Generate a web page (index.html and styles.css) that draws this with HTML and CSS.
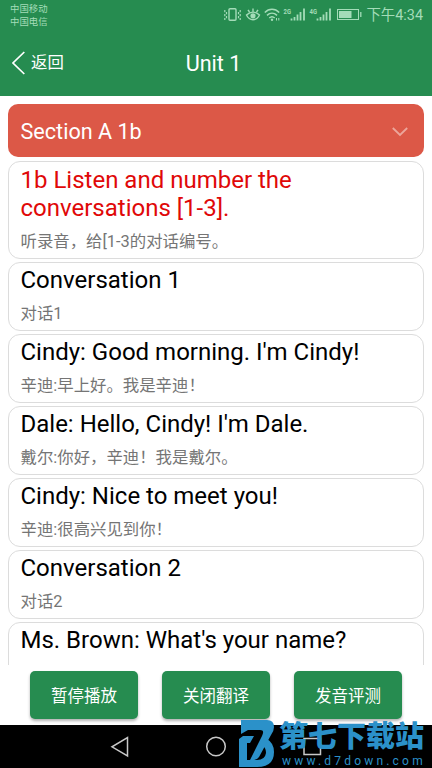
FILE: index.html
```html
<!DOCTYPE html>
<html lang="zh-CN">
<head>
  <meta charset="UTF-8" />
  <meta name="viewport" content="width=device-width,initial-scale=1.0"/>
  <title>Unit 1</title>
  <link rel="stylesheet" href="styles.css">
</head>
<body>
  <div class="screen">
    <header class="header">
      <div class="status-bar">
        <div class="carriers">
          <div>中国移动</div>
          <div>中国电信</div>
        </div>
        <div class="status-right">
          <svg class="status-icons" width="138" height="16" viewBox="0 0 138 16" fill="none" stroke="currentColor">
            <!-- vibrate -->
            <rect x="5" y="1.7" width="7" height="11.6" rx="1" stroke-width="1.4"/>
            <path d="M.8 3v2.200M2.500 5v2.200M.8 7v2.200M2.500 9v2.200M.8 11v2M16.200 3v2.200M14.500 5v2.200M16.200 7v2.200M14.500 9v2.200M16.200 11v2" stroke-width="1.200"/>
            <!-- eye comfort -->
            <path d="M22.500 8c4-3.800 9-3.800 13 0-3 6.300-10 6.300-13 0zM29 1.500v3M24 2.800l1.500 2.200M34 2.800l-1.500 2.200" stroke-width="1.400"/>
            <circle cx="29" cy="8.800" r="2.600" fill="currentColor" stroke="none"/>
            <!-- wifi -->
            <path d="M40.800 5.500c4.200-4.200 10.200-4.200 14.400 0M43 8.400c3-2.800 7-2.800 10 0M45.300 11c1.600-1.500 3.800-1.500 5.400 0" stroke-width="1.500"/>
            <circle cx="48" cy="12.800" r="1.200" fill="currentColor" stroke="none"/>
            <path d="M52.500 11v2.500M54.800 11v2.500" stroke-width="1"/>
            <!-- signal bars -->
            <path d="M67.500 11.500v2M70.500 10v3.500M73.500 7.500v6M76.500 5v8.500M80 1.500v12M93.500 11.500v2M96.500 10v3.500M99.500 7.500v6M102.500 5v8.500M106 1.500v12" stroke-width="1.800"/>
            <!-- battery -->
            <rect x="113.500" y="2.500" width="21" height="10" stroke-width="1"/>
            <path d="M115 4h12.500v7H115z" fill="currentColor" stroke="none"/>
            <path d="M136.800 5v5" stroke-width="1.300"/>
            <g class="net" fill="currentColor" stroke="none">
              <text x="59.500" y="7" textLength="7.500" lengthAdjust="spacingAndGlyphs">2G</text>
              <text x="85.500" y="7" textLength="7.500" lengthAdjust="spacingAndGlyphs">4G</text>
            </g>
          </svg>
          <span class="time">下午4:34</span>
        </div>
      </div>
      <div class="title-bar">
        <a class="back">
          <svg width="13" height="24" viewBox="0 0 13 24" fill="none" stroke="#fff" stroke-width="1.7"><path d="M12.300 1L1 12l11.300 11"/></svg>
          <span>返回</span>
        </a>
        <h1 class="title">Unit 1</h1>
      </div>
    </header>

    <main class="list">
      <div class="section-head">
        <span>Section A 1b</span>
        <svg width="16" height="10" viewBox="0 0 16 10" fill="none" stroke="#eca69b" stroke-width="1.800"><path d="M.8 1L8 8l7.200-7"/></svg>
      </div>
      <div class="card active">
        <p class="en">1b Listen and number the conversations [1-3].</p>
        <p class="zh">听录音，给[1-3的对话编号。</p>
      </div>
      <div class="card">
        <p class="en">Conversation 1</p>
        <p class="zh">对话1</p>
      </div>
      <div class="card">
        <p class="en">Cindy: Good morning. I'm Cindy!</p>
        <p class="zh">辛迪:早上好。我是辛迪！</p>
      </div>
      <div class="card">
        <p class="en">Dale: Hello, Cindy! I'm Dale.</p>
        <p class="zh">戴尔:你好，辛迪！我是戴尔。</p>
      </div>
      <div class="card">
        <p class="en">Cindy: Nice to meet you!</p>
        <p class="zh">辛迪:很高兴见到你！</p>
      </div>
      <div class="card">
        <p class="en">Conversation 2</p>
        <p class="zh">对话2</p>
      </div>
      <div class="card">
        <p class="en">Ms. Brown: What's your name?</p>
      </div>
    </main>

    <div class="actions">
      <button class="btn">暂停播放</button>
      <button class="btn">关闭翻译</button>
      <button class="btn">发音评测</button>
    </div>

    <nav class="nav-bar">
      <svg width="432" height="43" viewBox="0 0 432 43" fill="none" stroke="#c8c8c8" stroke-width="1.500">
        <path d="M127.500 12.500v18.500l-15.500-9.200z"/>
        <circle cx="216" cy="21.500" r="9.300"/>
        <path d="M304 13.500h16.500v16H304z"/>
      </svg>
    </nav>

    <div class="watermark">
      <svg width="36" height="48" viewBox="0 0 36 48" fill="#2b91c9">
        <path d="M0 19l4-3h11l-4 7H8v17h10q8 0 9-7 0-5-3-7l4-7q7 4 7 13 0 15-17 15H0z"/>
        <path d="M2 0h26q7 0 7 7 0 4-3 8L20 37q-2 3-5 3h-4l12-24q3-6-2-6H9l-7 4z"/>
      </svg>
      <div class="watermark-text">
        <div class="watermark-name">第七下载站</div>
        <div class="watermark-url">www.d7down.com</div>
      </div>
    </div>
  </div>
</body>
</html>
```
FILE: styles.css
```css
* {
  box-sizing: border-box;
}
html, body {
  margin: 0;
  height: 100%;
}
body {
  font-family: Roboto, 'Noto Sans CJK SC', sans-serif;
  background: #fff;
}
h1, p {
  margin: 0;
  font-weight: 400;
}
svg {
  display: block;
}
.screen {
  position: relative;
  width: 432px;
  height: 768px;
  display: flex;
  flex-direction: column;
  overflow: hidden;
}
.header {
  flex: none;
  height: 96px;
  background: #268c50;
  color: #fff;
}
.status-bar {
  height: 30px;
  padding: 0 9px 0 10px;
  display: flex;
  justify-content: space-between;
  color: #a4dcb8;
}
.carriers {
  padding-top: 2px;
  font-size: 9.4px;
  line-height: 13px;
}
.status-right {
  display: flex;
  align-items: center;
  gap: 4px;
}
.net {
  font-size: 8px;
  font-weight: 700;
}
.time {
  padding-top: 2px;
  font-size: 14.4px;
  line-height: 28px;
}
.title-bar {
  height: 66px;
  display: grid;
  grid-template-columns: 1fr auto 1fr;
  align-items: center;
  padding: 0 17px 0 12px;
}
.back {
  display: flex;
  align-items: center;
  gap: 6px;
  font-size: 16.4px;
  line-height: 22px;
}
.title {
  font-size: 21.6px;
}
.list {
  flex: none;
  height: 569px;
  padding: 8px 8px 0;
  overflow: hidden;
}
.section-head {
  height: 53px;
  margin-bottom: 4px;
  padding: 2px 16px 0 12.5px;
  border-radius: 10px;
  background: #dc5847;
  color: #fff;
  font-size: 21.6px;
  display: flex;
  align-items: center;
  justify-content: space-between;
}
.card {
  height: 69px;
  margin-bottom: 3px;
  padding: 3px 12px 0 11.5px;
  border: 1px solid #dcdcdc;
  border-radius: 12px;
}
.card.active {
  height: 98px;
  padding-top: 4px;
}
.en {
  font-size: 24px;
  line-height: 28px;
  color: #000;
}
.active .en {
  width: 320px;
  color: #e00808;
}
.zh {
  margin-top: 8px;
  font-size: 16.4px;
  line-height: 24px;
  color: #757575;
}
.actions {
  height: 60px;
  padding: 6px 30px 0;
  display: flex;
  gap: 24px;
}
.btn {
  flex: 1;
  height: 48px;
  padding: 0;
  border: none;
  border-radius: 5px;
  background: #268c50;
  color: #fff;
  font-family: inherit;
  font-size: 16.5px;
  box-shadow: 0 2px 3px rgba(0,0,0,0.3);
}
.nav-bar {
  height: 43px;
  background: #000;
}
.watermark {
  position: absolute;
  left: 239px;
  top: 720px;
  display: flex;
  gap: 4px;
  color: #2b91c9;
}
.watermark-name {
  font-size: 29px;
  line-height: 34px;
  font-weight: 900;
  white-space: nowrap;
}
.watermark-url {
  padding-left: 3px;
  font-size: 12px;
  line-height: 14px;
  letter-spacing: 3.2px;
  white-space: nowrap;
}
```
